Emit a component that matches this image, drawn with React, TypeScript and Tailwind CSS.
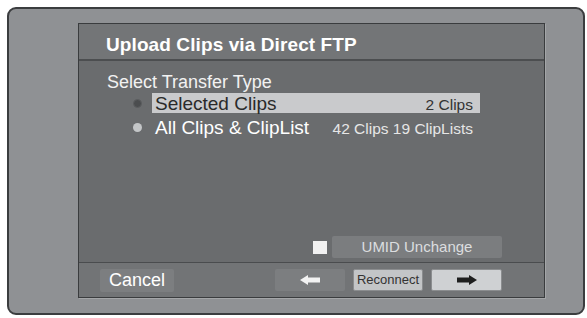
import React from 'react';

const ArrowLeft = ({ color }: { color: string }) => (
  <svg width="20" height="10" viewBox="0 0 20 10">
    <path d="M0 5 L8 0 L8 2.5 L20 2.5 L20 7.5 L8 7.5 L8 10 Z" fill={color} />
  </svg>
);

const ArrowRight = ({ color }: { color: string }) => (
  <svg width="20" height="10" viewBox="0 0 20 10">
    <path d="M20 5 L12 0 L12 2.5 L0 2.5 L0 7.5 L12 7.5 L12 10 Z" fill={color} />
  </svg>
);

const App: React.FC = () => {
  return (
    <div
      className="w-[587px] h-[318px] bg-white pt-[7px] pl-[7px]"
      style={{ fontFamily: '"Liberation Sans", Arial, sans-serif' }}
    >
      {/* outer bezel */}
      <div className="w-[578px] h-[308px] rounded-[9px] border-2 border-[#3b3d3f] bg-[#8f9194] pl-[69px] pt-[14px]">
        {/* screen */}
        <div className="w-[467px] h-[275px] border border-[#3a3c3e] bg-[#6a6c6e] flex flex-col shadow-[1px_1px_0_#a4a6a8]">
          {/* title */}
          <div className="h-[37px] shrink-0 bg-[#737577] border-b-2 border-[#4c4e50] pl-[27px] pt-[10px]">
            <div className="text-[19px] leading-[22px] font-bold text-white tracking-[0.1px]">Upload Clips via Direct FTP</div>
          </div>

          {/* body */}
          <div className="flex-1 flex flex-col border-b border-[#4a4c4e] pt-[11px]">
            <div className="pl-[28px] text-[18px] leading-[20px] text-[#f2f2f2]">Select Transfer Type</div>

            <div className="mt-[1px] ml-[54px] flex items-center">
              <div className="w-[9px] h-[9px] rounded-full bg-[#4b4d4f] border border-[#5c5e60]" />
              <div className="ml-[10px] w-[328px] h-[20px] bg-[#c9cacc] flex items-baseline justify-between pl-[3px] pr-[7px]">
                <span className="text-[19px] leading-[20px] text-[#2a2a2a]">Selected Clips</span>
                <span className="text-[15.5px] text-[#333]">2 Clips</span>
              </div>
            </div>

            <div className="mt-[4px] ml-[54px] flex items-center">
              <div className="w-[9px] h-[9px] rounded-full bg-[#c4c6c8]" />
              <div className="ml-[10px] w-[328px] h-[20px] flex items-baseline justify-between pl-[3px] pr-[7px]">
                <span className="text-[19px] leading-[20px] text-white">All Clips &amp; ClipList</span>
                <span className="text-[15.5px] text-[#e6e6e6]">42 Clips 19 ClipLists</span>
              </div>
            </div>

            <div className="mt-auto mb-[4px] pr-[42px] flex justify-end items-center gap-[5px]">
              <div className="w-[14px] h-[13px] bg-[#f1f1f1]" />
              <div className="w-[170px] h-[22px] rounded-[2px] bg-[#7b7d7f] flex items-center justify-center text-[15px] text-[#dcdddf]">
                UMID Unchange
              </div>
            </div>
          </div>

          {/* footer */}
          <div className="h-[34px] shrink-0 bg-[#727476] flex items-center justify-between pl-[21px] pr-[42px]">
            <div className="w-[74px] h-[23px] rounded-[2px] bg-[#7c7e80] flex items-center justify-center text-[18px] text-white">
              Cancel
            </div>
            <div className="flex items-center gap-[8px]">
              <div className="w-[70px] h-[22px] rounded-[2px] bg-[#7c7e80] flex items-center justify-center">
                <ArrowLeft color="#f2f2f2" />
              </div>
              <div className="w-[70px] h-[22px] rounded-[2px] bg-[#c3c5c7] border border-[#8b8d8f] flex items-center justify-center text-[13px] text-[#333]">
                Reconnect
              </div>
              <div className="w-[71px] h-[22px] rounded-[2px] bg-[#cfd1d3] border border-[#8b8d8f] flex items-center justify-center">
                <ArrowRight color="#1e1e1e" />
              </div>
            </div>
          </div>
        </div>
      </div>
    </div>
  );
};

export default App;
